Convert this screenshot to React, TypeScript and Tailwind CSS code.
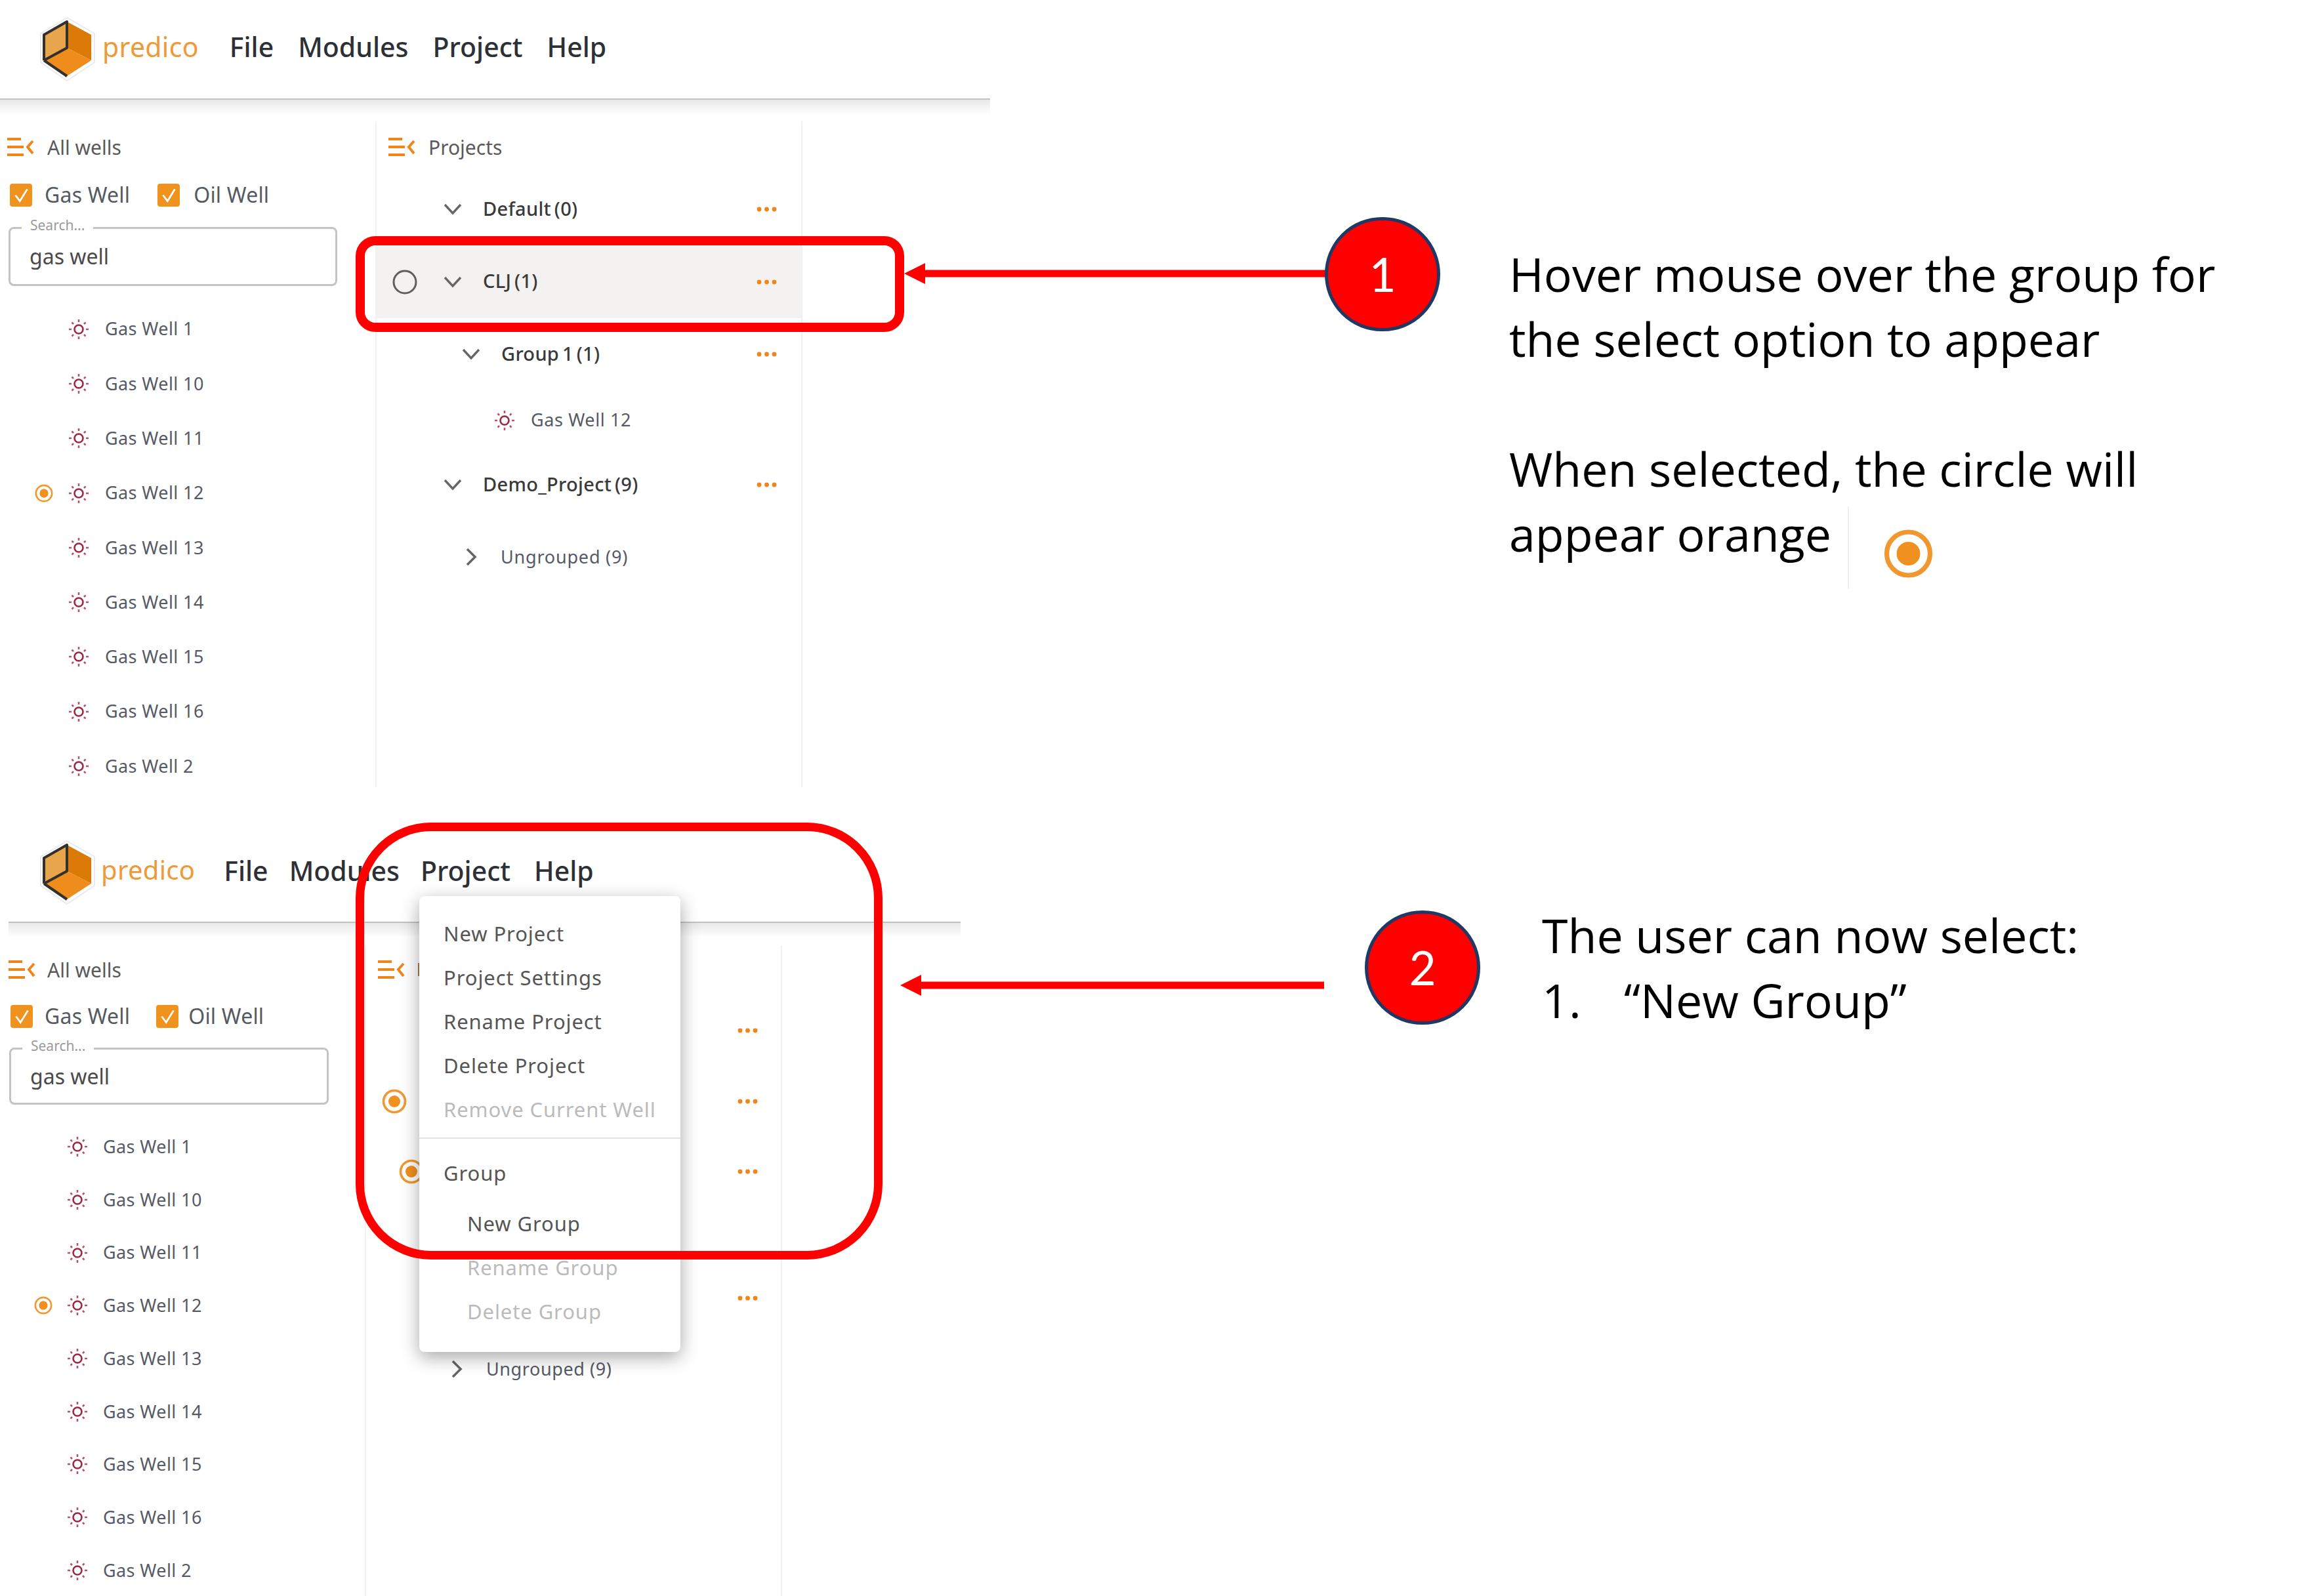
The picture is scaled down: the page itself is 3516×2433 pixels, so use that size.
import React from "react";

const Logo = () => (
  <svg viewBox="0 0 89 100" className="w-[89px] h-[100px] shrink-0">
    <path d="M43 2 L3 26 L3 70 L43 98 L85 70 L85 26 Z" fill="#fff" stroke="#eceaea" strokeWidth="2" />
    <path d="M43 8 L8 28 L8 67 L43 48 Z" fill="#e9a54c" />
    <path d="M43 8 L80 28 L80 67 L43 48 Z" fill="#dc7a08" />
    <path d="M8 67 L43 48 L80 67 L43 91 Z" fill="#ee8c1c" />
    <path d="M8 67 L43 91 M8 67 L8 28 L43 8 L43 48 L8 67" fill="none" stroke="#33312f" strokeWidth="4" strokeLinejoin="round" />
  </svg>
);

const PanelIcon = () => (
  <svg viewBox="0 0 41 28" className="w-[41px] h-[28px] shrink-0">
    <path d="M0 2 H21 M0 14 H25 M0 26 H25" stroke="#f0861a" strokeWidth="4" fill="none" />
    <path d="M39 5 L31 14 L39 24" stroke="#f0861a" strokeWidth="4" fill="none" />
  </svg>
);

const Check = () => (
  <span className="w-[34px] h-[35px] rounded-[4px] bg-[#f0921e] flex items-center justify-center shrink-0">
    <svg viewBox="0 0 24 24" className="w-[27px] h-[27px]">
      <path d="M4 12 L10 20 L20 4" stroke="#fff" strokeWidth="2.4" fill="none" />
    </svg>
  </span>
);

const Sun = () => (
  <svg viewBox="0 0 32 32" className="w-[32px] h-[32px] shrink-0">
    <circle cx="16" cy="16" r="6.5" stroke="#9c2a44" strokeWidth="2.6" fill="none" />
    <path
      d="M16 1 V5 M16 27 V31 M1 16 H5 M27 16 H31 M5.5 5.5 L8 8 M24 24 L26.5 26.5 M5.5 26.5 L8 24 M24 8 L26.5 5.5"
      stroke="#b5536a"
      strokeWidth="2.6"
      fill="none"
    />
  </svg>
);

const Radio = ({ className }: { className: string }) => (
  <svg viewBox="0 0 38 38" className={className}>
    <circle cx="19" cy="19" r="16.5" stroke="#f0982f" strokeWidth="3.6" fill="#fff" />
    <circle cx="19" cy="19" r="9" fill="#f0901e" />
  </svg>
);

const Dots = () => (
  <svg viewBox="0 0 31 8" className="w-[31px] h-[8px] shrink-0">
    <circle cx="4" cy="4" r="3.4" fill="#f0861a" />
    <circle cx="15.5" cy="4" r="3.4" fill="#f0861a" />
    <circle cx="27" cy="4" r="3.4" fill="#f0861a" />
  </svg>
);

const ChevronDown = () => (
  <svg viewBox="0 0 28 18" className="w-[28px] h-[18px] shrink-0">
    <path d="M2 2 L14 15 L26 2" stroke="#666" strokeWidth="3.4" fill="none" />
  </svg>
);

const ChevronRight = () => (
  <svg viewBox="0 0 28 28" className="w-[28px] h-[28px] shrink-0">
    <path d="M8 2 L20 14 L8 26" stroke="#666" strokeWidth="3.6" fill="none" />
  </svg>
);

const wells = ["Gas Well 1", "Gas Well 10", "Gas Well 11", "Gas Well 12", "Gas Well 13", "Gas Well 14", "Gas Well 15", "Gas Well 16", "Gas Well 2"];

const WellList = ({ rowClass, pad, gapA, gapB }: { rowClass: string; pad: string; gapA: string; gapB: string }) => (
  <div className="flex flex-col">
    {wells.map((w) => (
      <div key={w} className={`flex items-center ${rowClass} ${pad}`}>
        <span className="w-[28px] h-[28px] shrink-0">
          {w === "Gas Well 12" && <Radio className="w-[28px] h-[28px]" />}
        </span>
        <span className={gapA}>
          <Sun />
        </span>
        <span className={`${gapB} text-[27px] tracking-[0.4px] text-[#555a66]`}>{w}</span>
      </div>
    ))}
  </div>
);

const Search = ({ box }: { box: string }) => (
  <div className={`relative rounded-[8px] border-[3px] border-[#c4c4c4] flex items-center pl-[29px] ${box}`}>
    <span className="absolute left-[17px] -top-[17px] bg-white px-[13px] text-[21px] leading-[22px] text-[#9a9a9a]">Search...</span>
    <span className="text-[32px] text-[#4a4a4a]">gas well</span>
  </div>
);

const Row = ({ className, children }: { className: string; children?: React.ReactNode }) => (
  <div className={`flex items-center ${className}`}>{children}</div>
);

const Menu = () => {
  const item = "h-[67px] flex items-center text-[31px] tracking-[0.9px]";
  return (
    <div className="absolute left-[639px] top-[112px] w-[398px] h-[695px] bg-white rounded-[8px] shadow-[0_8px_28px_rgba(0,0,0,0.35)] pt-[24px] flex flex-col">
      <div className={`${item} pl-[37px] text-[#555]`}>New Project</div>
      <div className={`${item} pl-[37px] text-[#555]`}>Project Settings</div>
      <div className={`${item} pl-[37px] text-[#555]`}>Rename Project</div>
      <div className={`${item} pl-[37px] text-[#555]`}>Delete Project</div>
      <div className={`${item} pl-[37px] text-[#bbb]`}>Remove Current Well</div>
      <div className="mt-[9px] h-[2px] bg-[#e2e2e2]" />
      <div className={`${item} mt-[19px] pl-[37px] text-[#555]`}>Group</div>
      <div className={`${item} mt-[10px] pl-[73px] text-[#555]`}>New Group</div>
      <div className={`${item} pl-[73px] text-[#bbb]`}>Rename Group</div>
      <div className={`${item} pl-[73px] text-[#bbb]`}>Delete Group</div>
    </div>
  );
};

const ArrowLeft = ({ className, width }: { className: string; width: number }) => (
  <svg viewBox={`0 0 ${width} 32`} width={width} height={32} className={className}>
    <path d={`M0 16 L32 0 V10.5 H${width} V21.5 H32 V32 Z`} fill="#ff0000" />
  </svg>
);

const Badge = ({ className, label }: { className: string; label: string }) => (
  <div className={`absolute w-[176px] h-[174px] rounded-full bg-[#ff0000] border-[5px] border-[#203864] flex items-center justify-center text-white text-[71px] font-['Lato'] ${className}`}>
    {label}
  </div>
);

const BarShadow = () => (
  <span className="absolute left-0 right-0 top-full h-[24px] bg-linear-to-b from-black/10 to-transparent" />
);

export default function App() {
  const brand = "text-[#ee9a3a] tracking-[0.3px] leading-none";
  const nav = "text-[41px] font-medium text-[#2d3036]";
  const note = "font-['Open_Sans',sans-serif] text-[71.7px] leading-[99px] text-black whitespace-nowrap";
  const head = "text-[30px] text-[#5a5a5a]";
  const chk = "text-[32px] tracking-[0.2px] text-[#555a60]";
  const bold = "-mt-[3px] text-[29px] font-medium tracking-[0.3px] [word-spacing:-3px] text-[#3a3a3a]";
  const light = "text-[27px] tracking-[0.6px] text-[#555a66]";
  const bar = "relative border-b-2 border-[#d6d6d6]";
  return (
    <div className="relative w-[3516px] h-[2433px] bg-white overflow-hidden font-['Noto_Sans',sans-serif]">
      {/* first shot */}
      <section className="flex h-[1254px]">
        <div className="w-[1509px] shrink-0 flex flex-col">
          <header className={`h-[152px] flex items-center pl-[59px] ${bar}`}>
            <Logo />
            <span className={`ml-[8px] -mt-[8px] text-[41px] ${brand}`}>predico</span>
            <nav className="ml-[47px] flex gap-[37px] -mt-[6px]">
              <span className={nav}>File</span>
              <span className={nav}>Modules</span>
              <span className={nav}>Project</span>
              <span className={nav}>Help</span>
            </nav>
            <BarShadow />
          </header>
          <div className="mt-[33px] flex h-[1015px]">
            <div className="w-[572px] shrink-0 pt-[19px]">
              <Row className="h-[40px] pl-[11px] gap-[20px]">
                <PanelIcon />
                <span className={head}>All wells</span>
              </Row>
              <Row className="h-[40px] mt-[33px] pl-[15px]">
                <Check />
                <span className={`ml-[19px] ${chk}`}>Gas Well</span>
                <span className="ml-[42px]"><Check /></span>
                <span className={`ml-[21px] ${chk}`}>Oil Well</span>
              </Row>
              <div className="mt-[29px] pl-[13px]">
                <Search box="w-[501px] h-[90px]" />
              </div>
              <div className="mt-[24px]">
                <WellList rowClass="h-[83.3px]" pad="pl-[53px]" gapA="ml-[23px]" gapB="ml-[24px]" />
              </div>
            </div>
            <div className="w-[651px] shrink-0 border-x-2 border-[#f1f1f1] pt-[19px]">
              <Row className="h-[40px] pl-[18px] gap-[20px]">
                <PanelIcon />
                <span className={head}>Projects</span>
              </Row>
              <Row className="mt-[20px] h-[110px] pl-[102px] pr-[37px]">
                <ChevronDown />
                <span className={`ml-[32px] ${bold}`}>Default (0)</span>
                <span className="ml-auto"><Dots /></span>
              </Row>
              <Row className="h-[111px] pl-[24px] pr-[37px] bg-[#f3f2f1]">
                <svg viewBox="0 0 38 38" className="w-[38px] h-[38px] shrink-0">
                  <circle cx="19" cy="19" r="17" stroke="#5e5e5e" strokeWidth="3" fill="none" />
                </svg>
                <span className="ml-[40px]"><ChevronDown /></span>
                <span className={`ml-[32px] ${bold}`}>CLJ (1)</span>
                <span className="ml-auto"><Dots /></span>
              </Row>
              <Row className="h-[110px] pl-[130px] pr-[37px]">
                <ChevronDown />
                <span className={`ml-[32px] ${bold}`}>Group 1 (1)</span>
                <span className="ml-auto"><Dots /></span>
              </Row>
              <Row className="h-[91px] pl-[179px]">
                <Sun />
                <span className={`ml-[24px] ${light}`}>Gas Well 12</span>
              </Row>
              <Row className="h-[106px] pl-[102px] pr-[37px]">
                <ChevronDown />
                <span className={`ml-[32px] ${bold}`}>Demo_Project (9)</span>
                <span className="ml-auto"><Dots /></span>
              </Row>
              <Row className="h-[114px] pl-[130px]">
                <ChevronRight />
                <span className={`ml-[31px] tracking-[0.8px] ${light}`}>Ungrouped (9)</span>
              </Row>
            </div>
          </div>
        </div>
        <div className={`ml-[791px] pt-[368px] ${note}`}>
          <p>Hover mouse over the group for</p>
          <p>the select option to appear</p>
          <p className="h-[99px]" />
          <p>When selected, the circle will</p>
          <div className="flex items-start">
            <span>appear orange</span>
            <span className="ml-[25px] mt-[8px] w-[2px] h-[126px] bg-[#f0f0f0]" />
            <span className="ml-[51px] mt-[42px]">
              <Radio className="w-[79px] h-[76px]" />
            </span>
          </div>
        </div>
      </section>

      {/* second shot */}
      <section className="relative flex h-[1179px]">
        <div className="w-[1464px] shrink-0 flex flex-col">
          <header className={`ml-[13px] h-[153px] flex items-center pl-[46px] ${bar}`}>
            <Logo />
            <span className={`ml-[6px] -mt-[8px] text-[40px] ${brand}`}>predico</span>
            <nav className="ml-[44px] flex gap-[32px] -mt-[4px]">
              <span className={nav}>File</span>
              <span className={nav}>Modules</span>
              <span className={nav}>Project</span>
              <span className={`ml-[4px] ${nav}`}>Help</span>
            </nav>
            <BarShadow />
          </header>
          <div className="mt-[34px] flex h-[992px]">
            <div className="w-[556px] shrink-0 pt-[17px]">
              <Row className="h-[40px] pl-[13px] gap-[18px]">
                <PanelIcon />
                <span className={head}>All wells</span>
              </Row>
              <Row className="h-[40px] mt-[31px] pl-[16px]">
                <Check />
                <span className={`ml-[18px] ${chk}`}>Gas Well</span>
                <span className="ml-[40px]"><Check /></span>
                <span className={`ml-[15px] ${chk}`}>Oil Well</span>
              </Row>
              <div className="mt-[28px] pl-[14px]">
                <Search box="w-[487px] h-[87px]" />
              </div>
              <div className="mt-[24px]">
                <WellList rowClass="h-[80.7px]" pad="pl-[52px]" gapA="ml-[22px]" gapB="ml-[23px]" />
              </div>
            </div>
            <div className="w-[636px] shrink-0 border-x-2 border-[#f1f1f1] pt-[17px]">
              <Row className="h-[40px] pl-[18px] gap-[20px]">
                <PanelIcon />
                <span className="w-[3px] h-[20px] bg-[#b07a3c]" />
              </Row>
              <Row className="mt-[19px] h-[108px] pr-[35px] justify-end">
                <Dots />
              </Row>
              <Row className="h-[108px] pl-[24px] pr-[35px] justify-between">
                <Radio className="w-[38px] h-[38px]" />
                <Dots />
              </Row>
              <Row className="h-[106px] pl-[50px] pr-[35px] justify-between">
                <Radio className="w-[38px] h-[38px]" />
                <Dots />
              </Row>
              <div className="h-[86px]" />
              <Row className="h-[108px] pr-[35px] justify-end">
                <Dots />
              </Row>
              <Row className="h-[108px] pl-[124px]">
                <ChevronRight />
                <span className={`ml-[31px] ${light}`}>Ungrouped (9)</span>
              </Row>
            </div>
          </div>
        </div>
        <div className={`ml-[886px] pt-[122px] ${note}`}>
          <p>The user can now select:</p>
          <div className="flex">
            <span className="w-[125px]">1.</span>
            <span>“New Group”</span>
          </div>
        </div>
        <Menu />
      </section>

      {/* annotations on top */}
      <div className="absolute left-[542px] top-[360px] w-[836px] h-[146px] border-[14px] border-[#ff0000] rounded-[30px]" />
      <ArrowLeft className="absolute left-[1378px] top-[401px]" width={650} />
      <Badge className="left-[2019px] top-[331px]" label="1" />
      <div className="absolute left-[542px] top-[1254px] w-[803px] h-[666px] border-[13px] border-[#ff0000] rounded-[115px]" />
      <ArrowLeft className="absolute left-[1372px] top-[1486px]" width={646} />
      <Badge className="left-[2080px] top-[1388px]" label="2" />
    </div>
  );
}
